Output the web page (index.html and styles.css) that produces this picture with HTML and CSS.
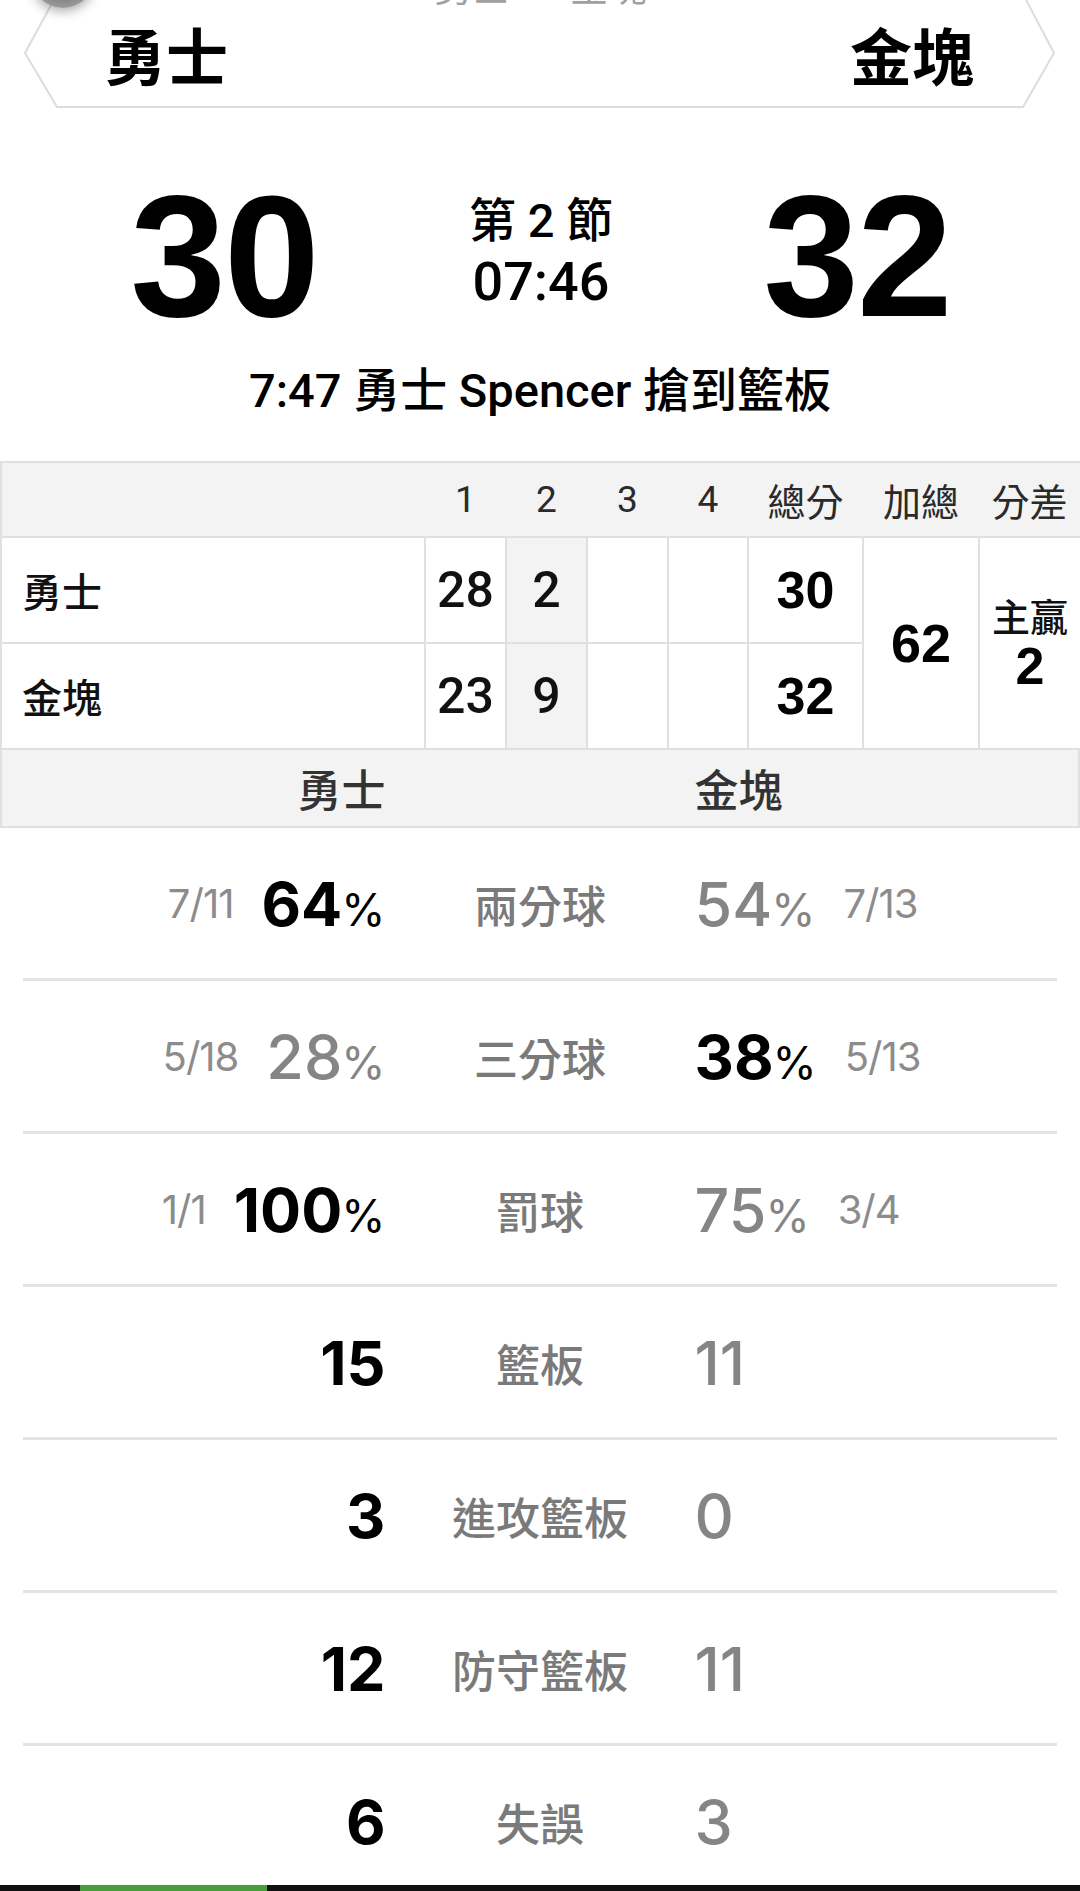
FILE: index.html
```html
<!DOCTYPE html>
<html lang="zh-Hant">
<head>
<meta charset="utf-8">
<title>勇士 vs 金塊</title>
<link rel="stylesheet" href="styles.css">
</head>
<body>
<div class="page">
  <header class="banner">
    <svg class="banner-shape" width="1080" height="110" viewBox="0 0 1080 110" aria-hidden="true">
      <polygon points="56,-4 1024,-4 1054,53 1023,107 57,107 25,53" fill="#ffffff" stroke="#dcdcdc" stroke-width="2"/>
    </svg>
    <div class="back-btn"></div>
    <div class="top-title"><span>勇士</span><span>金塊</span></div>
    <div class="team-name">勇士</div>
    <div class="team-name">金塊</div>
  </header>

  <section class="score">
    <div class="big">30</div>
    <div class="period">
      <div class="quarter">第 2 節</div>
      <div class="clock">07:46</div>
    </div>
    <div class="big">32</div>
  </section>

  <p class="play">7:47 勇士 Spencer 搶到籃板</p>

  <table class="box">
    <colgroup>
      <col class="c-name"><col class="c-q"><col class="c-q"><col class="c-q"><col class="c-q4"><col class="c-tot"><col class="c-sum"><col class="c-diff">
    </colgroup>
    <thead>
      <tr><th></th><th>1</th><th>2</th><th>3</th><th>4</th><th class="hz">總分</th><th class="hz">加總</th><th class="hz">分差</th></tr>
    </thead>
    <tbody>
      <tr>
        <td class="name">勇士</td><td class="q">28</td><td class="q cur">2</td><td class="q"></td><td class="q"></td><td class="tot">30</td>
        <td class="sum" rowspan="2">62</td>
        <td class="diff" rowspan="2"><div class="diff-lbl">主贏</div><div class="diff-val">2</div></td>
      </tr>
      <tr>
        <td class="name">金塊</td><td class="q">23</td><td class="q cur">9</td><td class="q"></td><td class="q"></td><td class="tot">32</td>
      </tr>
    </tbody>
  </table>

  <div class="teams">
    <div class="side left">勇士</div>
    <div></div>
    <div class="side right">金塊</div>
  </div>

  <div class="stats">
    <div class="stat">
      <div class="side left"><span class="frac">7/11</span><span class="val win">64<span class="pct">%</span></span></div>
      <div class="label">兩分球</div>
      <div class="side right"><span class="val">54<span class="pct">%</span></span><span class="frac">7/13</span></div>
    </div>
    <div class="stat">
      <div class="side left"><span class="frac">5/18</span><span class="val">28<span class="pct">%</span></span></div>
      <div class="label">三分球</div>
      <div class="side right"><span class="val win">38<span class="pct">%</span></span><span class="frac">5/13</span></div>
    </div>
    <div class="stat">
      <div class="side left"><span class="frac">1/1</span><span class="val win">100<span class="pct">%</span></span></div>
      <div class="label">罰球</div>
      <div class="side right"><span class="val">75<span class="pct">%</span></span><span class="frac">3/4</span></div>
    </div>
    <div class="stat">
      <div class="side left"><span class="val win">15</span></div>
      <div class="label">籃板</div>
      <div class="side right"><span class="val">11</span></div>
    </div>
    <div class="stat">
      <div class="side left"><span class="val win">3</span></div>
      <div class="label">進攻籃板</div>
      <div class="side right"><span class="val">0</span></div>
    </div>
    <div class="stat">
      <div class="side left"><span class="val win">12</span></div>
      <div class="label">防守籃板</div>
      <div class="side right"><span class="val">11</span></div>
    </div>
    <div class="stat">
      <div class="side left"><span class="val win">6</span></div>
      <div class="label">失誤</div>
      <div class="side right"><span class="val">3</span></div>
    </div>
  </div>

  <div class="tabbar"><div class="tab-active"></div></div>
</div>
</body>
</html>
```

FILE: styles.css
```css
* { box-sizing: border-box; }

html, body {
  margin: 0;
  padding: 0;
  background: #ffffff;
}

body {
  font-family: "Liberation Sans", "Noto Sans CJK TC", sans-serif;
  color: #000;
}

.page {
  position: relative;
  width: 1080px;
  height: 1891px;
  overflow: hidden;
  display: flex;
  flex-direction: column;
}

/* ---------- banner ---------- */
.banner {
  position: relative;
  height: 108px;
  flex: none;
  display: flex;
  align-items: center;
  justify-content: space-between;
  padding: 0 106px 0 104px;
}

.banner-shape {
  position: absolute;
  left: 0;
  top: 0;
}

.back-btn {
  position: absolute;
  left: 32px;
  top: -52px;
  width: 62px;
  height: 60px;
  border-radius: 50%;
  background: radial-gradient(circle at 50% 40%, #6a6a6a 0%, #8a8a8a 60%, #b5b5b5 100%);
  box-shadow: 0 3px 12px rgba(0, 0, 0, 0.35);
}

.top-title {
  position: absolute;
  left: 0;
  right: 0;
  top: -31px;
  display: flex;
  justify-content: center;
  gap: 60px;
  font-size: 38px;
  line-height: 1;
  color: #a0a0a0;
}

.team-name {
  position: relative;
  font-family: "Noto Sans CJK TC", sans-serif;
  font-weight: 700;
  font-size: 62px;
  line-height: 1;
  color: #000;
}

/* ---------- score ---------- */
.score {
  flex: none;
  margin-top: 62px;
  display: grid;
  grid-template-columns: 448px 1fr 446px;
  height: 172px;
}

.big {
  font-weight: 700;
  font-size: 172px;
  line-height: 172px;
  text-align: center;
  letter-spacing: -2px;
}

.period {
  display: flex;
  flex-direction: column;
  align-items: center;
  padding-top: 27px;
  gap: 10px;
}

.quarter {
  font-family: "Roboto", "Noto Sans CJK TC", sans-serif;
  font-size: 47px;
  line-height: 48px;
  font-weight: 500;
}

.clock {
  font-family: "Roboto", "Liberation Sans", sans-serif;
  font-weight: 500;
  font-size: 54px;
  line-height: 54px;
}

.play {
  flex: none;
  margin: 26px 0 0;
  text-align: center;
  font-family: "Roboto", "Noto Sans CJK TC", sans-serif;
  font-weight: 500;
  font-size: 47px;
  line-height: 46px;
}

/* ---------- box score table ---------- */
.box {
  flex: none;
  margin-top: 47px;
  width: 1080px;
  border-collapse: collapse;
  table-layout: fixed;
  border: 2px solid #e0e0e0;
}

.c-name { width: 424px; }
.c-q { width: 81px; }
.c-q4 { width: 80px; }
.c-tot { width: 115px; }
.c-sum { width: 116px; }
.c-diff { width: 102px; }

.box th,
.box td {
  padding: 0;
  border: 2px solid #e0e0e0;
  text-align: center;
  vertical-align: middle;
}

.box thead th {
  height: 75px;
  background: #f3f3f3;
  border-left: none;
  border-right: none;
  font-family: "Roboto", "Noto Sans CJK TC", sans-serif;
  font-weight: 400;
  font-size: 37px;
  color: #2a2a2a;
}

.box thead th.hz {
  font-size: 38px;
}

.box tbody td {
  height: 106px;
}

.box td.name {
  text-align: left;
  padding-left: 20px;
  font-family: "Noto Sans CJK TC", sans-serif;
  font-weight: 500;
  font-size: 40px;
  color: #111;
}

.box td.q {
  font-family: "Roboto", "Liberation Sans", sans-serif;
  font-weight: 500;
  font-size: 50px;
  color: #111;
}

.box td.cur {
  background: #f3f3f3;
}

.box td.tot {
  font-size: 52px;
  font-weight: 700;
}

.box td.sum {
  font-size: 54px;
  font-weight: 700;
}

.diff-lbl {
  font-family: "Noto Sans CJK TC", sans-serif;
  font-weight: 500;
  font-size: 38px;
  line-height: 46px;
  color: #111;
}

.diff-val {
  font-size: 52px;
  line-height: 56px;
  font-weight: 700;
}

/* ---------- team header row ---------- */
.teams {
  flex: none;
  height: 78px;
  display: grid;
  grid-template-columns: 1fr 309px 1fr;
  align-items: center;
  padding: 0 23px;
  background: #f3f3f3;
  border: 2px solid #e0e0e0;
  border-top: none;
  font-family: "Noto Sans CJK TC", sans-serif;
  font-weight: 500;
  font-size: 44px;
  color: #333;
}

.teams .side.left { text-align: right; }
.teams .side.right { text-align: left; }

/* ---------- stats ---------- */
.stats {
  flex: none;
  display: flex;
  flex-direction: column;
  padding: 0 23px;
}

.stat {
  height: 153px;
  flex: none;
  display: grid;
  grid-template-columns: 1fr 309px 1fr;
  align-items: center;
  border-bottom: 3px solid #e3e3e3;
  padding-top: 2px;
}

.stat .side {
  display: flex;
  align-items: center;
  gap: 28px;
}

.stat .side.left { justify-content: flex-end; }
.stat .side.right { justify-content: flex-start; }

.val {
  font-family: "Inter", "Liberation Sans", sans-serif;
  font-weight: 500;
  font-size: 61px;
  line-height: 1;
  color: #858585;
}

.val.win {
  font-weight: 700;
  color: #000;
}

.pct {
  font-weight: 400;
  font-size: 45px;
  margin-left: -1px;
}

.frac {
  font-family: "Inter", "Liberation Sans", sans-serif;
  font-size: 40px;
  line-height: 1;
  letter-spacing: -1px;
  color: #8c8c8c;
}

.label {
  text-align: center;
  font-family: "Noto Sans CJK TC", sans-serif;
  font-weight: 500;
  font-size: 44px;
  line-height: 1;
  color: #7a7a7a;
}

/* ---------- bottom tab bar ---------- */
.tabbar {
  position: absolute;
  left: 0;
  right: 0;
  bottom: 0;
  height: 6px;
  background: #111;
}

.tab-active {
  margin-left: 80px;
  width: 187px;
  height: 100%;
  background: #4a9d3c;
}
```
